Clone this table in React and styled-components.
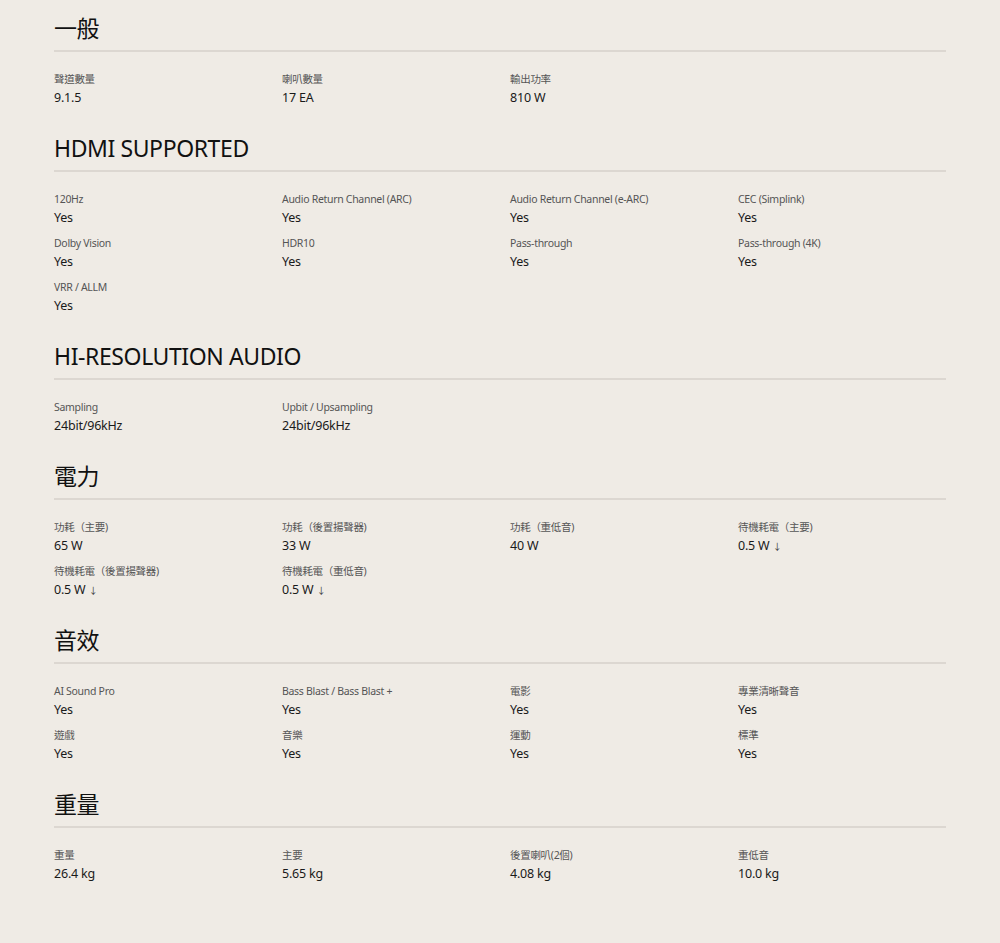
import React from "react";
import styled, { createGlobalStyle } from "styled-components";

const GlobalStyle = createGlobalStyle`
  html, body {
    margin: 0;
    padding: 0;
    background-color: #efebe5;
  }
  body {
    font-family: "Noto Sans", "Noto Sans CJK TC", sans-serif;
    color: #1a1a1a;
  }
`;

const Page = styled.div`
  padding: 12px 54px 40px 54px;
  min-height: 943px;
  box-sizing: border-box;
  background-color: #efebe5;
`;

const Section = styled.section`
  margin-bottom: 25px;
`;

const Heading = styled.h2`
  margin: 0;
  height: 32px;
  font-size: 23px;
  line-height: 32px;
  font-weight: 400;
  color: #111;
  padding-bottom: 6px;
  border-bottom: 2px solid #dcd7d1;
  letter-spacing: -0.4px;
`;

const SpecGrid = styled.dl`
  margin: 19px 0 0 0;
  display: grid;
  grid-template-columns: 228px 228px 228px 1fr;
  row-gap: 8px;
`;

const Item = styled.div`
  display: flex;
  flex-direction: column;
`;

const Label = styled.dt`
  height: 17px;
  font-size: 10.5px;
  line-height: 17px;
  letter-spacing: -0.3px;
  color: #555;
  white-space: nowrap;
`;

const Value = styled.dd`
  margin: 0;
  height: 19px;
  font-size: 12.5px;
  line-height: 19px;
  letter-spacing: -0.2px;
  color: #1a1a1a;
  white-space: nowrap;
`;

const Arrow = styled.span`
  font-size: 9px;
  line-height: 1;
  margin-left: 1px;
  color: #333;
`;

const sections = [
  {
    title: "一般",
    items: [
      ["聲道數量", "9.1.5"],
      ["喇叭數量", "17 EA"],
      ["輸出功率", "810 W"],
    ],
  },
  {
    title: "HDMI SUPPORTED",
    items: [
      ["120Hz", "Yes"],
      ["Audio Return Channel (ARC)", "Yes"],
      ["Audio Return Channel (e-ARC)", "Yes"],
      ["CEC (Simplink)", "Yes"],
      ["Dolby Vision", "Yes"],
      ["HDR10", "Yes"],
      ["Pass-through", "Yes"],
      ["Pass-through (4K)", "Yes"],
      ["VRR / ALLM", "Yes"],
    ],
  },
  {
    title: "HI-RESOLUTION AUDIO",
    items: [
      ["Sampling", "24bit/96kHz"],
      ["Upbit / Upsampling", "24bit/96kHz"],
    ],
  },
  {
    title: "電力",
    items: [
      ["功耗（主要)", "65 W"],
      ["功耗（後置揚聲器)", "33 W"],
      ["功耗（重低音)", "40 W"],
      ["待機耗電（主要)", "0.5 W", true],
      ["待機耗電（後置揚聲器)", "0.5 W", true],
      ["待機耗電（重低音)", "0.5 W", true],
    ],
  },
  {
    title: "音效",
    items: [
      ["AI Sound Pro", "Yes"],
      ["Bass Blast / Bass Blast +", "Yes"],
      ["電影", "Yes"],
      ["專業清晰聲音", "Yes"],
      ["遊戲", "Yes"],
      ["音樂", "Yes"],
      ["運動", "Yes"],
      ["標準", "Yes"],
    ],
  },
  {
    title: "重量",
    items: [
      ["重量", "26.4 kg"],
      ["主要", "5.65 kg"],
      ["後置喇叭(2個)", "4.08 kg"],
      ["重低音", "10.0 kg"],
    ],
  },
];

const App = () => {
  return (
    <>
      <GlobalStyle />
      <Page>
        {sections.map((section) => (
          <Section key={section.title}>
            <Heading>{section.title}</Heading>
            <SpecGrid>
              {section.items.map(([label, value, below]) => (
                <Item key={label}>
                  <Label>{label}</Label>
                  <Value>
                    {value}
                    {below && <Arrow> ↓</Arrow>}
                  </Value>
                </Item>
              ))}
            </SpecGrid>
          </Section>
        ))}
      </Page>
    </>
  );
};

export default App;
